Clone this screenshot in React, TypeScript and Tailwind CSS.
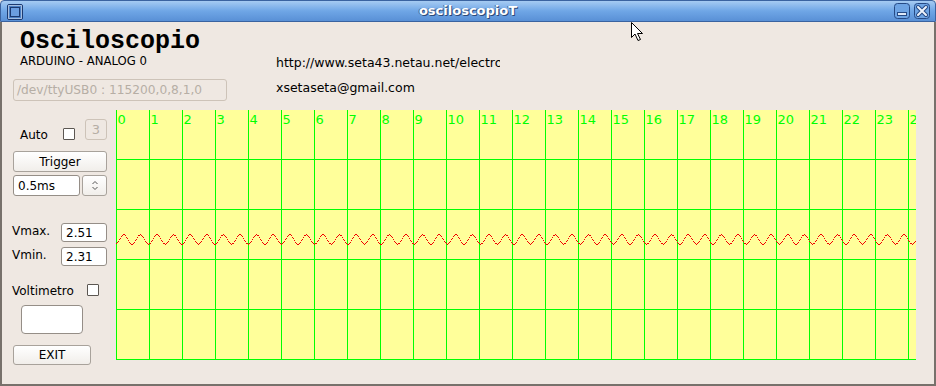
import { FunctionComponent } from "react";

const ui = { fontFamily: '"DejaVu Sans", Verdana, sans-serif' };

// red trace, one pixel per column like the original canvas
const wavePath = (() => {
    let d = "";
    for (let x = 0; x < 800; x++) {
        const y = Math.round(129 - 4.7 * Math.cos((2 * Math.PI * (x - 7.3)) / 16.6));
        d += `M${x} ${y}h1v1h-1z`;
    }
    return d;
})();

const Chart: FunctionComponent = () => {
    const cols = Array.from({ length: 25 }, (_, i) => i);
    const rows = [49.5, 99.5, 149.5, 199.5, 249.5];
    return (
        <svg width="800" height="250" className="block shrink-0 bg-[#ffff9a]" shapeRendering="crispEdges">
            {cols.map((i) => (
                <line key={`v${i}`} x1={0.5 + 33 * i} y1="0" x2={0.5 + 33 * i} y2="250" stroke="#00ff00" strokeWidth="1" />
            ))}
            {rows.map((y) => (
                <line key={`h${y}`} x1="0" y1={y} x2="800" y2={y} stroke="#00ff00" strokeWidth="1" />
            ))}
            {cols.map((i) => (
                <text key={`t${i}`} x={1.5 + 33 * i} y="14" fill="#00ff00" fontSize="13" style={ui}>
                    {i}
                </text>
            ))}
            <path d={wavePath} fill="#f00000" />
        </svg>
    );
};

const Checkbox: FunctionComponent = () => (
    <div className="w-[12px] h-[12px] bg-white border border-[#5c5752] rounded-[1px] shrink-0" />
);

const Button: FunctionComponent<{ label: string; className: string }> = ({ label, className }) => (
    <div className={`flex items-center justify-center rounded-[3px] border border-[#a8a29b] bg-gradient-to-b from-white to-[#f1eeea] text-[12px] text-black ${className}`}>
        {label}
    </div>
);

const Field: FunctionComponent<{ value: string; className: string }> = ({ value, className }) => (
    <div className={`flex items-center rounded-[3px] border border-[#958e87] bg-white text-[12px] text-black pl-[4px] ${className}`}>
        {value}
    </div>
);

const TitleBar: FunctionComponent = () => (
    <div className="relative h-[22px] shrink-0 rounded-t-[4px] border border-[#3a63a0] bg-gradient-to-b from-[#a6cbf2] via-[#6fa6e6] to-[#5990d6] flex items-center justify-center">
        <svg width="16" height="16" className="absolute left-[6px] top-[3px]">
            <rect x="0.5" y="0.5" width="15" height="15" rx="1.5" fill="#4b7fc4" stroke="#1c3a70" />
            <rect x="1.5" y="1.5" width="13" height="13" fill="none" stroke="#ffffff" strokeDasharray="1 1" />
            <rect x="3.5" y="3.5" width="9" height="9" fill="#6b9ee0" stroke="#1c3a70" />
        </svg>
        <span
            className="text-[13px] font-bold text-white"
            style={{ ...ui, textShadow: "1px 1px 0 #2d4a78, -1px 0 0 #3f68a8" }}
        >
            osciloscopioT
        </span>
        <div className="absolute right-[5px] top-[2px] flex gap-[4px]">
            <svg width="16" height="16">
                <rect x="0.5" y="0.5" width="15" height="15" rx="3" fill="#6ea4e4" stroke="#264a84" />
                <rect x="3.5" y="9.5" width="9" height="3" fill="#dfeaf8" stroke="#264a84" />
            </svg>
            <svg width="16" height="16">
                <rect x="0.5" y="0.5" width="15" height="15" rx="3" fill="#6ea4e4" stroke="#264a84" />
                <path d="M4 4 L12 12 M12 4 L4 12" stroke="#264a84" strokeWidth="4" strokeLinecap="round" />
                <path d="M4 4 L12 12 M12 4 L4 12" stroke="#eef4fc" strokeWidth="2" strokeLinecap="round" />
            </svg>
        </div>
    </div>
);

const App: FunctionComponent = () => {
    return (
        <div className="relative w-[936px] h-[386px] flex flex-col bg-[#efe8e2] overflow-hidden" style={ui}>
            <TitleBar />
            <div className="flex-1 flex flex-col border-x-2 border-b-2 border-[#77716b]">
                {/* header */}
                <div className="h-[88px] flex shrink-0">
                    <div className="ml-[11px] w-[214px] flex flex-col">
                        <div
                            className="mt-[7px] pl-[7px] h-[25px] leading-[25px] text-[25px] font-bold text-black"
                            style={{ fontFamily: '"Liberation Mono", "Courier New", monospace' }}
                        >
                            Osciloscopio
                        </div>
                        <div className="pl-[7px] h-[14px] leading-[14px] text-[11.7px] text-black">ARDUINO - ANALOG 0</div>
                        <div className="mt-[11px] h-[22px] w-[214px] rounded-[3px] border border-[#cdc3b8] flex items-center pl-[3px] text-[12.2px] text-[#b6aea5] whitespace-nowrap">
                            /dev/ttyUSB0 : 115200,0,8,1,0
                        </div>
                    </div>
                    <div className="ml-[49px] w-[224px] overflow-hidden flex flex-col mt-[28px] text-[12.5px] text-black whitespace-nowrap">
                        <div className="h-[25px] leading-[25px]">http://www.seta43.netau.net/electronica</div>
                        <div className="h-[25px] leading-[25px]">xsetaseta@gmail.com</div>
                    </div>
                </div>

                {/* main */}
                <div className="flex">
                    <div className="w-[114px] shrink-0 flex flex-col text-[12px] text-black">
                        <div className="mt-[9px] h-[21px] flex items-start">
                            <span className="ml-[18px] mt-[9px] leading-[14px]">Auto</span>
                            <div className="ml-[15px] mt-[9px]">
                                <Checkbox />
                            </div>
                            <div className="ml-[10px] w-[22px] h-[21px] rounded-[3px] border border-[#cdc3b8] flex items-center justify-center text-[13px] text-[#b6aea5]">
                                3
                            </div>
                        </div>
                        <Button label="Trigger" className="mt-[11px] ml-[11px] w-[94px] h-[21px]" />
                        <div className="mt-[3px] ml-[11px] flex gap-[2px]">
                            <Field value="0.5ms" className="w-[67px] h-[21px]" />
                            <div className="w-[25px] h-[21px] rounded-[3px] border border-[#a8a29b] bg-gradient-to-b from-white to-[#f1eeea] flex items-center justify-center">
                                <svg width="8" height="11">
                                    <path d="M1.5 4 L4 1.5 L6.5 4 M1.5 7 L4 9.5 L6.5 7" fill="none" stroke="#555" strokeWidth="1" />
                                </svg>
                            </div>
                        </div>
                        <div className="mt-[27px] ml-[10px] w-[95px] flex justify-between items-start">
                            <span className="mt-[1px] leading-[14px]">Vmax.</span>
                            <Field value="2.51" className="w-[46px] h-[19px]" />
                        </div>
                        <div className="mt-[5px] ml-[10px] w-[95px] flex justify-between items-start">
                            <span className="mt-[1px] leading-[14px]">Vmin.</span>
                            <Field value="2.31" className="w-[46px] h-[19px]" />
                        </div>
                        <div className="mt-[18px] ml-[10px] flex items-start">
                            <span className="leading-[14px]">Voltimetro</span>
                            <div className="ml-[13px]">
                                <Checkbox />
                            </div>
                        </div>
                        <div className="mt-[7px] ml-[19px] w-[62px] h-[29px] rounded-[4px] border border-[#958e87] bg-white" />
                        <Button label="EXIT" className="mt-[11px] ml-[11px] w-[78px] h-[20px]" />
                    </div>
                    <Chart />
                </div>
            </div>

            {/* mouse pointer */}
            <svg width="14" height="22" className="absolute left-[630px] top-[21px]">
                <path d="M1.5 1.5 L1.5 16.5 L5 13 L8 19.5 L10.5 18.5 L7.5 12.5 L12.5 12.5 Z" fill="#ffffff" stroke="#000000" strokeWidth="1" strokeLinejoin="round" />
            </svg>
        </div>
    );
};

export default App;
